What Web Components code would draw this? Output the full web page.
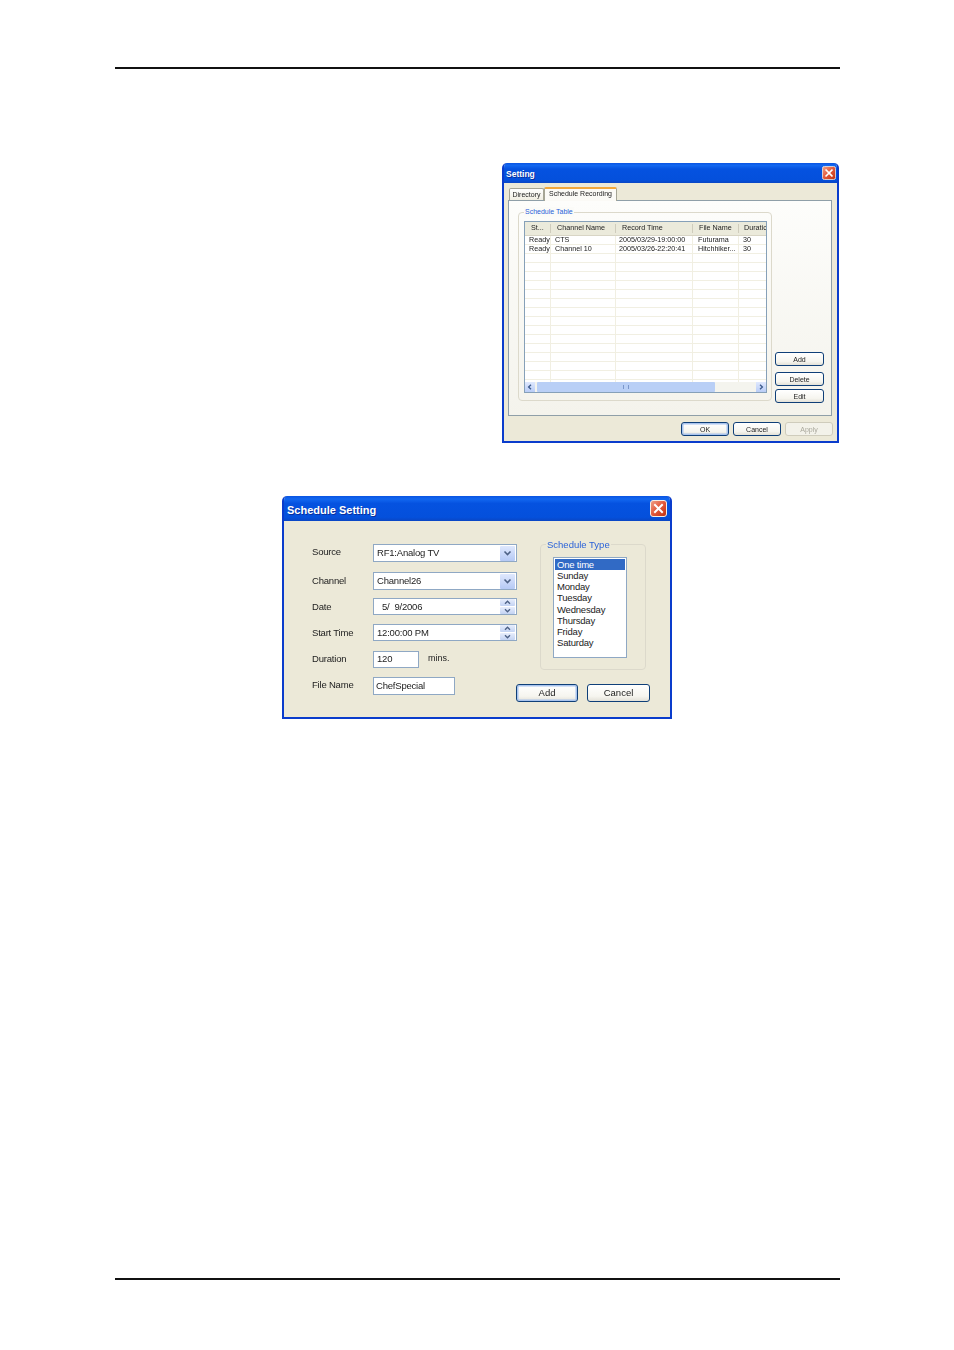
<!DOCTYPE html>
<html>
<head>
<meta charset="utf-8">
<title>Schedule Recording</title>
<style>
  html, body { margin: 0; background: #fff; }
  body { font-family: "Liberation Sans", Arial, sans-serif; color: #111; }
</style>
</head>
<body>
<doc-page>
  <xp-dialog title="Setting" style="margin: 94px 0 0 387px; width: 337px; height: 280px;" small>
    <setting-pane></setting-pane>
  </xp-dialog>
  <xp-dialog title="Schedule Setting" style="margin: 53px 0 0 167px; width: 390px; height: 223px;">
    <schedule-pane></schedule-pane>
  </xp-dialog>
</doc-page>

<script>
class DocPage extends HTMLElement {
    constructor() {
        super();
        this.attachShadow({mode: "open"}).innerHTML = `
            <style>
                :host { display: flex; flex-direction: column; box-sizing: border-box; width: 954px; height: 1350px; padding: 67px 114px 70px 115px; }
                .rule { height: 2px; background: #111; flex: none; }
                .rule.end { margin-top: auto; }
                .body { display: flex; flex-direction: column; align-items: flex-start; }
            </style>
            <div class="rule"></div>
            <div class="body"><slot></slot></div>
            <div class="rule end"></div>
        `;
    }
}

class XpDialog extends HTMLElement {
    constructor() {
        super();
        this.attachShadow({mode: "open"});
    }
    connectedCallback() {
        const small = this.hasAttribute("small");
        this.shadowRoot.innerHTML = `
            <style>
                :host { display: flex; flex-direction: column; flex: none; box-sizing: border-box; border: solid #0a3ccc; border-width: 0 2px 2px; border-radius: 5px 5px 0 0; background: #ece9d8; filter: blur(.4px); overflow: hidden; }
                .bar { display: flex; align-items: center; justify-content: space-between; flex: none; margin: 0 -2px; padding: 0 ${small ? 3 : 5}px 0 ${small ? 4 : 5}px; height: ${small ? 20 : 25}px; background: linear-gradient(#0a54e2, #1267f0 12%, #0552e0 30%, #0450dc 85%, #0a46c4); }
                .title { padding-top: 2px; color: #fff; font: bold ${small ? 8.5 : 11}px "Liberation Sans", Arial, sans-serif; text-shadow: 1px 1px 0 #0a2f9c; }
                svg { display: block; }
                .body { flex: 1; min-height: 0; }
            </style>
            <div class="bar">
                <span class="title">${this.getAttribute("title")}</span>
                <svg width="${small ? 14 : 17}" height="${small ? 14 : 17}" viewBox="0 0 17 17">
                    <defs><linearGradient id="r" x1="0" y1="0" x2="1" y2="1"><stop offset="0" stop-color="#f0a48c"/><stop offset=".5" stop-color="#e2583a"/><stop offset="1" stop-color="#c0300f"/></linearGradient></defs>
                    <rect x=".5" y=".5" width="16" height="16" rx="2.5" fill="url(#r)" stroke="#f4efe8"/>
                    <path d="M5 5l7 7M12 5l-7 7" stroke="#fff" stroke-width="2" stroke-linecap="square"/>
                </svg>
            </div>
            <div class="body"><slot></slot></div>
        `;
    }
}

class XpButton extends HTMLElement {
    constructor() {
        super();
        this.attachShadow({mode: "open"}).innerHTML = `
            <style>
                :host { display: flex; align-items: center; justify-content: center; flex: none; box-sizing: border-box; border: 1px solid #0f3f78; border-radius: 3px; padding-bottom: var(--btn-lift, 0); background: linear-gradient(#fff, #f6f5ef 70%, #e3e1d8); font-size: var(--btn-size, 7px); color: #222; }
                :host([primary]) { box-shadow: inset 0 0 0 1.5px #a9c4ee; }
                :host([disabled]) { border-color: #cfccbc; background: #f3f2ea; color: #aaa89c; }
            </style>
            <slot></slot>
        `;
    }
}

class XpGroup extends HTMLElement {
    constructor() {
        super();
        this.attachShadow({mode: "open"});
    }
    connectedCallback() {
        this.shadowRoot.innerHTML = `
            <style>
                :host { display: block; position: relative; box-sizing: border-box; flex: none; border: 1px solid #dcd9cb; border-radius: 4px; }
                .legend { position: absolute; top: var(--legend-top, -6px); left: 5px; padding: 0 1px; background: var(--legend-bg, #f7f6f1); color: #2a62d8; font-size: var(--legend-size, 7px); line-height: 10px; white-space: nowrap; }
            </style>
            <span class="legend">${this.getAttribute("label")}</span>
            <slot></slot>
        `;
    }
}

class XpField extends HTMLElement {
    constructor() {
        super();
        this.attachShadow({mode: "open"});
    }
    connectedCallback() {
        const kind = this.getAttribute("kind");
        const chevron = '<path d="M1.5 1.5L4.5 4.5 7.5 1.5" fill="none" stroke="#4d6185" stroke-width="1.6"/>';
        let button = "";
        if (kind === "select") {
            button = `<div class="btn"><svg width="9" height="6" viewBox="0 0 9 6">${chevron}</svg></div>`;
        } else if (kind === "spin") {
            button = `<div class="spin">
                <div class="btn"><svg width="9" height="5" viewBox="0 0 9 6" style="transform: scaleY(-1)">${chevron}</svg></div>
                <div class="btn"><svg width="9" height="5" viewBox="0 0 9 6">${chevron}</svg></div>
            </div>`;
        }
        this.shadowRoot.innerHTML = `
            <style>
                :host { display: flex; align-items: center; flex: none; box-sizing: border-box; border: 1px solid #8fa8c4; background: #fff; padding-left: var(--indent, 3px); font-size: 9.5px; letter-spacing: -.2px; color: #222; white-space: nowrap; }
                :host([kind="spin"]) .text { padding-bottom: 0; }
                .text { flex: 1; padding-bottom: 2px; }
                .btn { display: flex; align-items: center; justify-content: center; width: 15px; height: 15px; background: linear-gradient(#dfe8fd, #b5c9f5); border-radius: 1px; }
                .spin { display: flex; flex-direction: column; gap: 1px; }
                .spin .btn { height: 7px; background: linear-gradient(#e8eefc, #c3d3f3); }
                .wrap { margin-right: 1px; }
            </style>
            <span class="text"><slot></slot></span>
            <div class="wrap">${button}</div>
        `;
    }
}

class XpRow extends HTMLElement {
    constructor() {
        super();
        this.attachShadow({mode: "open"});
    }
    connectedCallback() {
        this.shadowRoot.innerHTML = `
            <style>
                :host { display: flex; align-items: center; flex: none; font-size: 9.5px; color: #222; }
                .label { width: 61px; flex: none; letter-spacing: -.2px; padding-bottom: var(--lift, 2px); }
            </style>
            <span class="label">${this.getAttribute("label")}</span>
            <slot></slot>
        `;
    }
}

class XpListbox extends HTMLElement {
    constructor() {
        super();
        this.attachShadow({mode: "open"});
    }
    connectedCallback() {
        const items = this.getAttribute("items").split(",");
        this.shadowRoot.innerHTML = `
            <style>
                :host { display: block; box-sizing: border-box; flex: none; border: 1px solid #8fa8c4; background: #fff; padding: 1px; font-size: 9.5px; letter-spacing: -.2px; color: #222; }
                div { height: 11.15px; line-height: 12px; padding-left: 2px; white-space: nowrap; }
                .on { background: #316ac5; color: #fff; }
            </style>
            ${items.map((item, i) => `<div class="${i === 0 ? "on" : ""}">${item}</div>`).join("")}
        `;
    }
}

const TABLE_COLS = "26px 65px 77px 46px 27px";
const TABLE_HEAD = ["St...", "Channel Name", "Record Time", "File Name", "Duratic"];
const TABLE_ROWS = [
    ["Ready", "CTS", "2005/03/29-19:00:00", "Futurama", "30"],
    ["Ready", "Channel 10", "2005/03/26-22:20:41", "Hitchhiker...", "30"],
];

class XpTable extends HTMLElement {
    constructor() {
        super();
        this.attachShadow({mode: "open"});
    }
    connectedCallback() {
        let rows = "";
        for (let i = 0; i < 17; i++) {
            const row = TABLE_ROWS[i] || ["", "", "", "", ""];
            rows += `<div class="row">${row.map(c => `<span>${c}</span>`).join("")}</div>`;
        }
        this.shadowRoot.innerHTML = `
            <style>
                :host { display: flex; flex-direction: column; box-sizing: border-box; flex: none; border: 1px solid #86a0b8; background: #fff; font-size: 7.2px; color: #222; overflow: hidden; }
                .head, .row { display: grid; grid-template-columns: ${TABLE_COLS}; flex: none; white-space: nowrap; }
                .head { height: 13px; background: #ebeadb; border-bottom: 1px solid #d8d5c5; }
                .head span { padding-left: 6px; border-right: 1px solid #cfccbc; overflow: hidden; margin: 2px 0; line-height: 7px; }
                .head span:last-child { border: 0; padding-left: 5px; }
                .list { flex: 1; min-height: 0; overflow: hidden; }
                .row { height: 9px; line-height: 7px; box-sizing: border-box; border-bottom: 1px solid #f1efe2; }
                .row span { padding-left: 4px; border-right: 1px solid #f1efe2; overflow: visible; }
                .row span:nth-child(3) { padding-left: 3px; }
                .row span:nth-child(4) { padding-left: 5px; }
                .row span:last-child { border: 0; }
                .bar { display: flex; align-items: center; flex: none; height: 10px; background: #f4f4ee; }
                .arrow { display: flex; align-items: center; justify-content: center; width: 10px; height: 10px; flex: none; background: linear-gradient(#dfe8fd, #b9cdf7); }
                .thumb { display: flex; align-items: center; justify-content: center; margin-left: 2px; width: 178px; height: 10px; background: #b9cff6; border-radius: 1px; }
                .thumb i { width: 4px; height: 4px; border: solid #7b97cc; border-width: 0 1px; }
                .fill { flex: 1; }
            </style>
            <div class="head">${TABLE_HEAD.map(c => `<span>${c}</span>`).join("")}</div>
            <div class="list">${rows}</div>
            <div class="bar">
                <div class="arrow"><svg width="6" height="6" viewBox="0 0 6 6"><path d="M4 .8L1.6 3 4 5.2" fill="none" stroke="#3c5a8c" stroke-width="1.3"/></svg></div>
                <div class="thumb"><i></i></div>
                <div class="fill"></div>
                <div class="arrow"><svg width="6" height="6" viewBox="0 0 6 6"><path d="M2 .8L4.4 3 2 5.2" fill="none" stroke="#3c5a8c" stroke-width="1.3"/></svg></div>
            </div>
        `;
    }
}

class SettingPane extends HTMLElement {
    constructor() {
        super();
        this.attachShadow({mode: "open"}).innerHTML = `
            <style>
                :host { display: flex; flex-direction: column; height: 100%; padding: 4px 0 0 4px; box-sizing: border-box; font-size: 7px; color: #222; }
                .tabs { display: flex; align-items: flex-end; height: 13px; padding-left: 1px; flex: none; position: relative; z-index: 1; }
                .tab { box-sizing: border-box; display: flex; align-items: center; justify-content: center; border: 1px solid #a6a595; border-bottom: 0; border-radius: 2px 2px 0 0; background: linear-gradient(#fff, #f0eee2); }
                .tab.off { width: 35px; height: 12px; padding-bottom: 1px; }
                .tab.on { width: 73px; height: 14px; margin-bottom: -1px; padding-bottom: 4px; border-top: 2px solid #f2a83c; background: #fbfaf6; }
                .panel { box-sizing: border-box; width: 324px; height: 216px; flex: none; border: 1px solid #8f9fa8; background: linear-gradient(#fdfdfb, #f4f3ec); display: flex; padding: 11px 0 0 9px; --legend-bg: #fbfbf8; }
                xp-group { width: 254px; height: 189px; padding: 8px 0 0 5px; }
                xp-table { width: 243px; height: 172px; }
                .side { display: flex; flex-direction: column; margin-left: 3px; padding-top: 140px; }
                .side xp-button { width: 49px; height: 14px; }
                .foot { display: flex; justify-content: flex-end; gap: 4px; width: 325px; padding-top: 6px; flex: none; }
                .foot xp-button { width: 48px; height: 14px; }
            </style>
            <div class="tabs">
                <div class="tab off">Directory</div>
                <div class="tab on">Schedule Recording</div>
            </div>
            <div class="panel">
                <xp-group label="Schedule Table"><xp-table></xp-table></xp-group>
                <div class="side">
                    <xp-button>Add</xp-button>
                    <xp-button style="margin-top: 6px">Delete</xp-button>
                    <xp-button style="margin-top: 3px">Edit</xp-button>
                </div>
            </div>
            <div class="foot">
                <xp-button primary>OK</xp-button>
                <xp-button>Cancel</xp-button>
                <xp-button disabled>Apply</xp-button>
            </div>
        `;
    }
}

class SchedulePane extends HTMLElement {
    constructor() {
        super();
        this.attachShadow({mode: "open"}).innerHTML = `
            <style>
                :host { display: flex; flex-direction: column; box-sizing: border-box; height: 100%; padding: 23px 0 0 28px; --btn-size: 9.5px; --btn-lift: 2px; --legend-size: 9.5px; --legend-top: -5px; --legend-bg: #ece9d8; }
                .top { display: flex; height: 133px; flex: none; }
                .form { display: flex; flex-direction: column; width: 205px; flex: none; }
                .wide { width: 144px; }
                xp-group { width: 106px; height: 126px; margin-left: 23px; padding: 12px 0 0 12px; }
                xp-listbox { width: 74px; height: 101px; }
                .end { display: flex; }
                .end xp-button { width: 62px; height: 18px; margin-top: 7px; }
                .mins { font-size: 9px; margin: -4px 0 0 9px; color: #222; }
            </style>
            <div class="top">
                <div class="form">
                    <xp-row label="Source" style="--lift: 4px"><xp-field class="wide" kind="select" style="height: 18px">RF1:Analog TV</xp-field></xp-row>
                    <xp-row label="Channel" style="margin-top: 10px"><xp-field class="wide" kind="select" style="height: 18px">Channel26</xp-field></xp-row>
                    <xp-row label="Date" style="margin-top: 8px; --lift: 0px"><xp-field class="wide" kind="spin" style="height: 17px; --indent: 8px">5/&nbsp; 9/2006</xp-field></xp-row>
                    <xp-row label="Start Time" style="margin-top: 9px; --lift: 0px"><xp-field class="wide" kind="spin" style="height: 17px">12:00:00 PM</xp-field></xp-row>
                    <xp-row label="Duration" style="margin-top: 10px">
                        <xp-field style="height: 17px; width: 46px">120</xp-field>
                        <span class="mins">mins.</span>
                    </xp-row>
                </div>
                <xp-group label="Schedule Type">
                    <xp-listbox items="One time,Sunday,Monday,Tuesday,Wednesday,Thursday,Friday,Saturday"></xp-listbox>
                </xp-group>
            </div>
            <div class="end">
                <xp-row label="File Name" style="height: 18px; --lift: 4px"><xp-field style="height: 18px; width: 82px; --indent: 2px">ChefSpecial</xp-field></xp-row>
                <xp-button primary style="margin-left: 61px">Add</xp-button>
                <xp-button style="margin-left: 9px; width: 63px">Cancel</xp-button>
            </div>
        `;
    }
}

customElements.define('doc-page', DocPage);
customElements.define('xp-dialog', XpDialog);
customElements.define('xp-button', XpButton);
customElements.define('xp-group', XpGroup);
customElements.define('xp-field', XpField);
customElements.define('xp-row', XpRow);
customElements.define('xp-listbox', XpListbox);
customElements.define('xp-table', XpTable);
customElements.define('setting-pane', SettingPane);
customElements.define('schedule-pane', SchedulePane);
</script>
</body>
</html>
